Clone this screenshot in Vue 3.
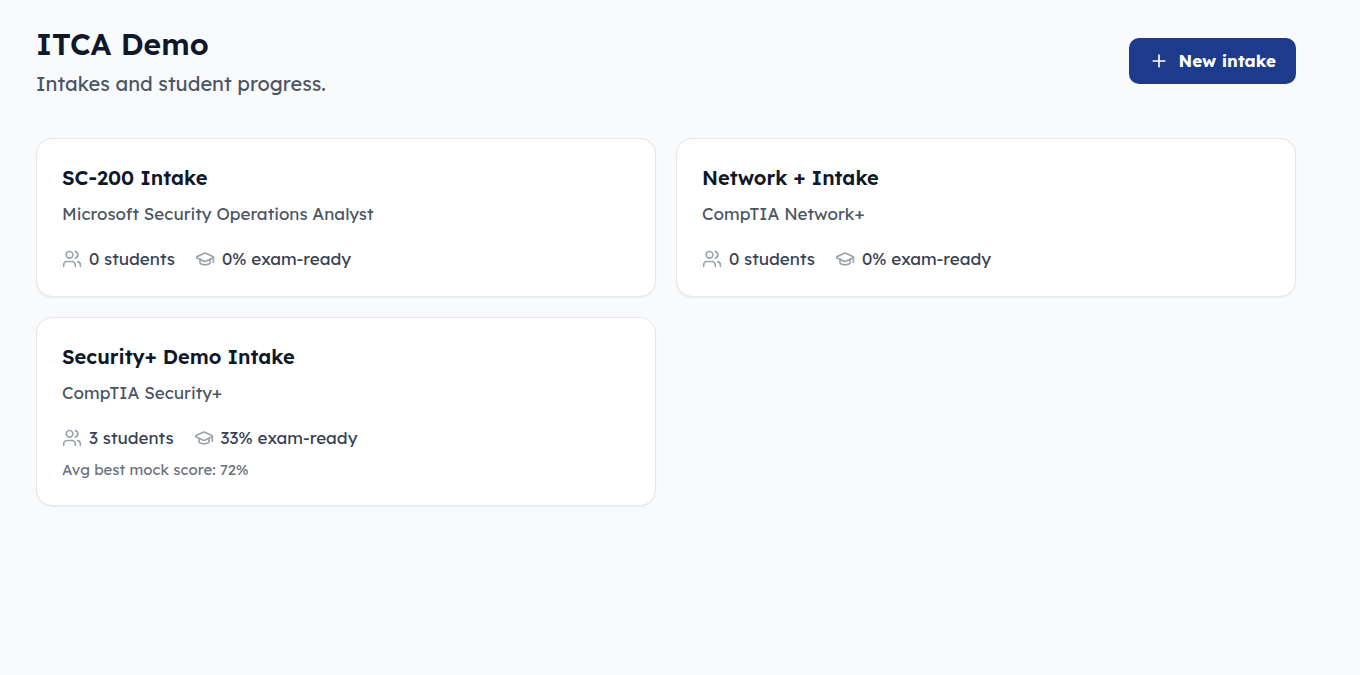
<script setup>
const intakes = [
  { id: 1, name: 'SC-200 Intake', course: 'Microsoft Security Operations Analyst', students: 0, ready: 0, mock: null },
  { id: 2, name: 'Network + Intake', course: 'CompTIA Network+', students: 0, ready: 0, mock: null },
  { id: 3, name: 'Security+ Demo Intake', course: 'CompTIA Security+', students: 3, ready: 33, mock: 72 },
]
</script>

<template>
  <main class="page">
    <header class="header">
      <div>
        <h1 class="title">ITCA Demo</h1>
        <p class="subtitle">Intakes and student progress.</p>
      </div>
      <button type="button" class="new-button">
        <svg class="icon" viewBox="0 0 24 24" aria-hidden="true">
          <path d="M5 12h14M12 5v14" />
        </svg>
        New intake
      </button>
    </header>

    <section class="grid" aria-label="Intakes">
      <a v-for="intake in intakes" :key="intake.id" class="card" :href="`#intake-${intake.id}`">
        <h2 class="name">{{ intake.name }}</h2>
        <p class="course">{{ intake.course }}</p>
        <div class="stats">
          <span class="stat">
            <svg class="icon" viewBox="0 0 24 24" aria-hidden="true">
              <path d="M16 21v-2a4 4 0 0 0-4-4H6a4 4 0 0 0-4 4v2" />
              <circle cx="9" cy="7" r="4" />
              <path d="M22 21v-2a4 4 0 0 0-3-3.87" />
              <path d="M16 3.13a4 4 0 0 1 0 7.75" />
            </svg>
            {{ intake.students }} students
          </span>
          <span class="stat">
            <svg class="icon" viewBox="0 0 24 24" aria-hidden="true">
              <path d="M21.42 10.922a1 1 0 0 0-.019-1.838L12.83 5.18a2 2 0 0 0-1.66 0L2.6 9.08a1 1 0 0 0 0 1.832l8.57 3.908a2 2 0 0 0 1.66 0z" />
              <path d="M22 10v6" />
              <path d="M6 12.5V16a6 3 0 0 0 12 0v-3.5" />
            </svg>
            {{ intake.ready }}% exam-ready
          </span>
        </div>
        <p v-if="intake.mock !== null" class="mock">Avg best mock score: {{ intake.mock }}%</p>
      </a>
    </section>
  </main>
</template>

<style>
body {
  margin: 0;
  background: #f9fafc;
}
</style>

<style scoped>
.page {
  padding: 26px 64px 36px 36px;
  font-family: Lexend, Inter, "Liberation Sans", sans-serif;
  color: #0f172a;
}

.header {
  display: flex;
  align-items: center;
  justify-content: space-between;
  gap: 20px;
  margin-bottom: 42px;
}

h1,
h2,
p {
  margin: 0;
}

.title {
  font-size: 30px;
  line-height: 36px;
  font-weight: 600;
}

.subtitle {
  margin-top: 10px;
  font-size: 20px;
  line-height: 24px;
  color: #4b5563;
}

.new-button {
  display: inline-flex;
  align-items: center;
  gap: 10px;
  padding: 10px 20px;
  border: 0;
  border-radius: 10px;
  background: #1e3a8a;
  color: #fff;
  font-family: inherit;
  font-size: 17px;
  line-height: 26px;
  font-weight: 700;
  white-space: nowrap;
  cursor: pointer;
}

.icon {
  flex: none;
  width: 20px;
  height: 20px;
  fill: none;
  stroke: currentColor;
  stroke-width: 2;
  stroke-linecap: round;
  stroke-linejoin: round;
}

.grid {
  display: grid;
  grid-template-columns: repeat(2, minmax(0, 1fr));
  align-items: start;
  gap: 20px;
}

.card {
  display: block;
  padding: 24px 25px;
  border: 1px solid #e5e7eb;
  border-radius: 16px;
  background: #fff;
  box-shadow: 0 1px 2px rgba(0, 0, 0, 0.05);
  color: inherit;
  text-decoration: none;
}

.name {
  font-size: 20px;
  line-height: 30px;
  font-weight: 600;
}

.course {
  margin-top: 8px;
  font-size: 17px;
  line-height: 26px;
  color: #4b5563;
}

.stats {
  display: flex;
  flex-wrap: wrap;
  gap: 20px;
  margin-top: 19px;
  font-size: 17px;
  line-height: 26px;
  color: #374151;
}

.stat {
  display: inline-flex;
  align-items: center;
  gap: 7px;
}

.stat .icon {
  color: #9ca3af;
}

.mock {
  margin-top: 8px;
  font-size: 15px;
  line-height: 22px;
  color: #6b7280;
}
</style>
